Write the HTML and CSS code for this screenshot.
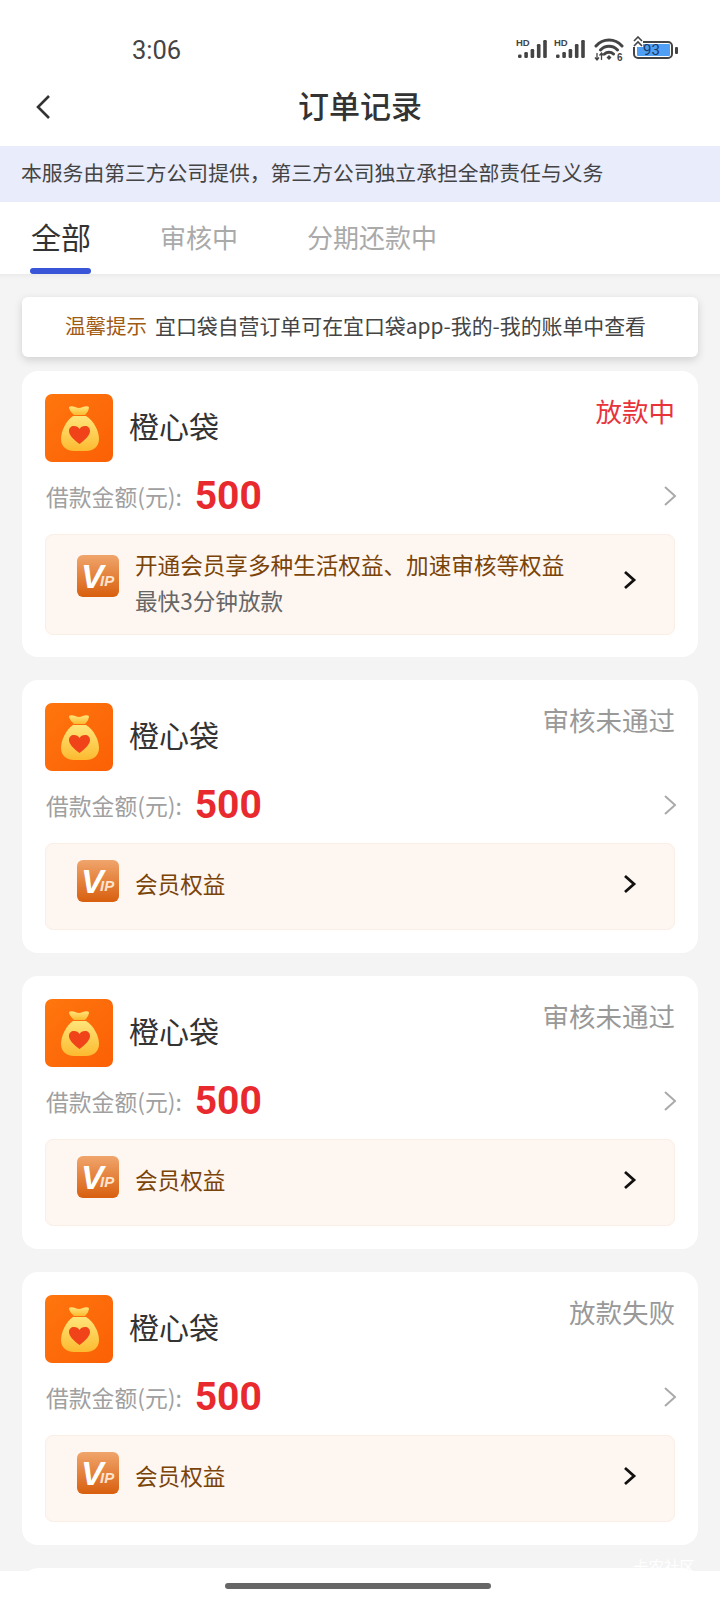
FILE: index.html
```html
<!DOCTYPE html>
<html lang="zh-CN">
<head>
    <meta charset="UTF-8">
    <meta name="viewport" content="width=device-width, initial-scale=1.0">
    <title>订单记录</title>
    <link rel="stylesheet" href="styles.css">
</head>
<body>
    <svg class="defs" width="0" height="0">
        <defs>
            <linearGradient id="bagBg" x1="0" y1="0" x2="1" y2="1">
                <stop offset="0" stop-color="#ff760e"/>
                <stop offset="1" stop-color="#fb6005"/>
            </linearGradient>
            <linearGradient id="bagFill" x1="0" y1="0" x2="0" y2="1">
                <stop offset="0" stop-color="#ffe57a"/>
                <stop offset="1" stop-color="#fcba30"/>
            </linearGradient>
            <linearGradient id="vipBg" x1="0" y1="0" x2="0" y2="1">
                <stop offset="0" stop-color="#f0a56c"/>
                <stop offset="1" stop-color="#d85f0e"/>
            </linearGradient>
            <symbol id="bag" viewBox="0 0 68 68">
                <rect width="68" height="68" rx="7" fill="url(#bagBg)"/>
                <path d="M24 13C27 11 31 14 34 14C37 14 41 11 44 13C44 16 42 19 40 21H29C27 19 24 16 24 13Z" fill="url(#bagFill)"/>
                <path d="M28 22H41C49 27 54 37 54 45C54 53 48 57 41 57H29C22 57 16 53 16 45C16 37 21 27 28 22Z" fill="url(#bagFill)"/>
                <path d="M34.5 50C28 45 24 41 24 37C24 34 26 32 29 32C31.5 32 33.5 33 34.5 35C35.5 33 37.5 32 40 32C43 32 45 34 45 37C45 41 41 45 34.5 50Z" fill="#f0431a"/>
            </symbol>
            <symbol id="vip" viewBox="0 0 42 42">
                <rect width="42" height="42" rx="6" fill="url(#vipBg)"/>
                <text x="4" y="33" class="vip-v">V</text>
                <text x="23" y="31" class="vip-ip">IP</text>
            </symbol>
            <symbol id="signal" viewBox="0 0 32 22">
                <text x="0" y="7" class="hd">HD</text>
                <rect x="2" y="15.5" width="3.6" height="3.5" rx="1.2"/>
                <rect x="8.3" y="13" width="3.6" height="6" rx="1.2"/>
                <rect x="14.6" y="10" width="3.6" height="9" rx="1.2"/>
                <rect x="20.9" y="5" width="3.6" height="14" rx="1.2"/>
                <rect x="27.2" y="1" width="3.6" height="18" rx="1.2"/>
            </symbol>
        </defs>
    </svg>

    <div class="page">
        <div class="status-bar">
            <span class="clock">3:06</span>
            <div class="status-icons">
                <svg class="signal"><use href="#signal"/></svg>
                <svg class="signal second"><use href="#signal"/></svg>
                <svg class="wifi" width="30" height="26" viewBox="0 0 30 26">
                    <path d="M2 9C9 1 21 1 28 9M6.5 13C11 8 19 8 23.5 13M10.5 17C13 14.5 17 14.5 19.5 17" fill="none" stroke="#444" stroke-width="3" stroke-linecap="round"/>
                    <path d="M12.5 20.5L15 18L17.5 20.5L15 23Z" fill="#444"/>
                    <path d="M3 16V23M1 20.5L3 23L5 20.5M7.5 16V23M5.5 18.5L7.5 16L9.5 18.5" fill="none" stroke="#444" stroke-width="1.3"/>
                    <text x="23" y="24" class="six">6</text>
                </svg>
                <div class="battery">
                    <div class="battery-body">
                        <div class="battery-level"></div>
                        <span class="battery-num">93</span>
                    </div>
                    <svg class="battery-charge" width="10" height="11" viewBox="0 0 10 11">
                        <path d="M1 5L5 1L9 5M1 10L5 6L9 10" fill="none" stroke="#444" stroke-width="1.6"/>
                    </svg>
                    <div class="battery-tip"></div>
                </div>
            </div>
        </div>

        <div class="nav-bar">
            <svg class="back" width="18" height="28" viewBox="0 0 18 28">
                <path d="M15 3L4 14l11 11" fill="none" stroke="#333" stroke-width="2.6"/>
            </svg>
            <h1>订单记录</h1>
        </div>

        <div class="banner">本服务由第三方公司提供，第三方公司独立承担全部责任与义务</div>

        <div class="tabs">
            <div class="tab active">全部</div>
            <div class="tab">审核中</div>
            <div class="tab">分期还款中</div>
        </div>

        <div class="list">
            <div class="notice"><span class="notice-tag">温馨提示</span>宜口袋自营订单可在宜口袋app-我的-我的账单中查看</div>

            <div class="card">
                <div class="card-head">
                    <svg class="logo"><use href="#bag"/></svg>
                    <span class="name">橙心袋</span>
                    <span class="state red">放款中</span>
                </div>
                <div class="amount-row">
                    <span class="amount-label">借款金额(元):</span>
                    <span class="amount">500</span>
                    <svg class="more" width="14" height="22" viewBox="0 0 14 22"><path d="M2 2l10 9-10 9" fill="none" stroke="#aaa" stroke-width="2"/></svg>
                </div>
                <div class="vip tall">
                    <svg class="vip-icon"><use href="#vip"/></svg>
                    <div class="vip-text">
                        <div class="vip-title">开通会员享多种生活权益、加速审核等权益</div>
                        <div class="vip-sub">最快3分钟放款</div>
                    </div>
                    <svg class="vip-arrow" width="14" height="20" viewBox="0 0 14 20"><path d="M2 2l9 8-9 8" fill="none" stroke="#111" stroke-width="2.8"/></svg>
                </div>
            </div>

            <div class="card">
                <div class="card-head">
                    <svg class="logo"><use href="#bag"/></svg>
                    <span class="name">橙心袋</span>
                    <span class="state">审核未通过</span>
                </div>
                <div class="amount-row">
                    <span class="amount-label">借款金额(元):</span>
                    <span class="amount">500</span>
                    <svg class="more" width="14" height="22" viewBox="0 0 14 22"><path d="M2 2l10 9-10 9" fill="none" stroke="#aaa" stroke-width="2"/></svg>
                </div>
                <div class="vip">
                    <svg class="vip-icon"><use href="#vip"/></svg>
                    <div class="vip-title">会员权益</div>
                    <svg class="vip-arrow" width="14" height="20" viewBox="0 0 14 20"><path d="M2 2l9 8-9 8" fill="none" stroke="#111" stroke-width="2.8"/></svg>
                </div>
            </div>

            <div class="card">
                <div class="card-head">
                    <svg class="logo"><use href="#bag"/></svg>
                    <span class="name">橙心袋</span>
                    <span class="state">审核未通过</span>
                </div>
                <div class="amount-row">
                    <span class="amount-label">借款金额(元):</span>
                    <span class="amount">500</span>
                    <svg class="more" width="14" height="22" viewBox="0 0 14 22"><path d="M2 2l10 9-10 9" fill="none" stroke="#aaa" stroke-width="2"/></svg>
                </div>
                <div class="vip">
                    <svg class="vip-icon"><use href="#vip"/></svg>
                    <div class="vip-title">会员权益</div>
                    <svg class="vip-arrow" width="14" height="20" viewBox="0 0 14 20"><path d="M2 2l9 8-9 8" fill="none" stroke="#111" stroke-width="2.8"/></svg>
                </div>
            </div>

            <div class="card">
                <div class="card-head">
                    <svg class="logo"><use href="#bag"/></svg>
                    <span class="name">橙心袋</span>
                    <span class="state">放款失败</span>
                </div>
                <div class="amount-row">
                    <span class="amount-label">借款金额(元):</span>
                    <span class="amount">500</span>
                    <svg class="more" width="14" height="22" viewBox="0 0 14 22"><path d="M2 2l10 9-10 9" fill="none" stroke="#aaa" stroke-width="2"/></svg>
                </div>
                <div class="vip">
                    <svg class="vip-icon"><use href="#vip"/></svg>
                    <div class="vip-title">会员权益</div>
                    <svg class="vip-arrow" width="14" height="20" viewBox="0 0 14 20"><path d="M2 2l9 8-9 8" fill="none" stroke="#111" stroke-width="2.8"/></svg>
                </div>
            </div>

            <!-- next card, only its top edge shows above the home bar -->
            <div class="card"></div>
        </div>

        <div class="home-area">
            <div class="home-bar"></div>
        </div>

        <div class="watermark">卡农社区</div>
    </div>
</body>
</html>
```

FILE: styles.css
```css
* {
    box-sizing: border-box;
}
html, body {
    margin: 0;
    padding: 0;
}
body {
    font-family: "Noto Sans CJK SC", "Noto Sans", sans-serif;
    background-color: #fff;
    color: #333;
}
.defs {
    position: absolute;
}
.page {
    position: relative;
    width: 720px;
    height: 1600px;
    display: flex;
    flex-direction: column;
    overflow: hidden;
}

/* status bar */
.status-bar {
    height: 78px;
    padding: 22px 42px 0 132px;
    display: flex;
    justify-content: space-between;
    align-items: center;
}
.clock {
    font-family: Roboto, sans-serif;
    font-size: 25.5px;
    color: #444;
}
.status-icons {
    display: flex;
    align-items: center;
}
.signal {
    width: 32px;
    height: 22px;
    fill: #444;
}
.signal.second {
    margin-left: 6px;
}
.wifi {
    margin-left: 8px;
}
.hd {
    font-family: "Liberation Sans", sans-serif;
    font-size: 9.5px;
    font-weight: bold;
    fill: #444;
}
.six {
    font-family: "Liberation Sans", sans-serif;
    font-size: 10px;
    font-weight: bold;
    fill: #444;
}
.battery {
    position: relative;
    display: flex;
    align-items: center;
    gap: 2px;
    margin-left: 9px;
}
.battery-body {
    position: relative;
    width: 40px;
    height: 18px;
    border: 2px solid #444;
    border-radius: 5px;
    padding: 1px 1px 1px 2px;
}
.battery-level {
    height: 100%;
    background-color: #4f9ff5;
    border-radius: 1px;
}
.battery-num {
    position: absolute;
    left: 8px;
    top: 0;
    font-family: Roboto, sans-serif;
    font-size: 15px;
    line-height: 14px;
    color: #1d3a66;
}
.battery-charge {
    position: absolute;
    left: 0;
    top: -5px;
    background-color: #fff;
}
.battery-tip {
    width: 3px;
    height: 7px;
    background-color: #444;
    border-radius: 1px;
}

/* title */
.nav-bar {
    position: relative;
    height: 68px;
    padding-bottom: 16px;
    display: flex;
    align-items: center;
    justify-content: center;
}
.nav-bar h1 {
    margin: 0;
    font-size: 31px;
    font-weight: 500;
    color: #333;
}
.back {
    position: absolute;
    left: 34px;
    top: 15px;
}
.banner {
    height: 56px;
    padding: 0 0 4px 21px;
    display: flex;
    align-items: center;
    background-color: #e9ecfb;
    font-size: 20.8px;
    color: #444;
}
.tabs {
    height: 72px;
    display: flex;
    background-color: #fff;
}
.tab {
    position: relative;
    font-size: 26px;
    line-height: 69px;
    color: #aaa;
    margin-left: 69px;
}
.tab.active {
    font-size: 30px;
    color: #333;
    margin-left: 31px;
}
.tab.active::after {
    content: "";
    position: absolute;
    left: -1px;
    right: 0;
    top: 66px;
    height: 6px;
    background-color: #3a56d8;
    border-radius: 3px;
}

/* list */
.list {
    flex: 1;
    padding: 23px 22px 0;
    background-color: #f4f4f4;
    box-shadow: inset 0 6px 6px -6px rgba(0, 0, 0, 0.08);
    overflow: hidden;
}
.notice {
    height: 60px;
    margin-bottom: 14px;
    padding: 0 0 4px 43px;
    display: flex;
    align-items: center;
    background-color: #fff;
    border-radius: 6px;
    box-shadow: 0 3px 8px rgba(0, 0, 0, 0.15);
    font-size: 20.9px;
    color: #444;
}
.notice-tag {
    font-size: 20.5px;
    color: #a05a14;
    margin-right: 8px;
}
.card {
    height: 273px;
    margin-bottom: 23px;
    padding: 23px 23px 0;
    background-color: #fff;
    border-radius: 16px;
}
.card:nth-child(2) {
    height: 286px;
}
.card-head {
    height: 68px;
    display: flex;
    align-items: center;
}
.logo {
    width: 68px;
    height: 68px;
    flex: none;
}
.name {
    margin: -6px 0 0 16px;
    font-size: 30px;
    color: #333;
}
.state {
    margin-left: auto;
    align-self: flex-start;
    font-size: 26.5px;
    line-height: 34px;
    color: #999;
}
.state.red {
    color: #e8333a;
}
.amount-row {
    height: 50px;
    margin-top: 9px;
    display: flex;
    align-items: center;
}
.amount-label {
    margin-left: 1px;
    font-size: 22.8px;
    color: #a0a0a0;
}
.amount {
    margin-left: 13px;
    font-family: Roboto, sans-serif;
    font-size: 39px;
    font-weight: bold;
    color: #e82a2f;
}
.more {
    margin-left: auto;
    margin-right: -2px;
}
.vip {
    position: relative;
    height: 87px;
    margin-top: 13px;
    padding: 16px 0 0 31px;
    display: flex;
    align-items: flex-start;
    background-color: #fef6f1;
    border: 1px solid #fbeee5;
    border-radius: 8px;
}
.vip.tall {
    height: 101px;
    padding-top: 20px;
}
.vip-icon {
    width: 42px;
    height: 42px;
    flex: none;
}
.vip-v {
    font-family: "Liberation Sans", sans-serif;
    font-size: 34px;
    font-weight: bold;
    font-style: italic;
    fill: #fff;
}
.vip-ip {
    font-family: "Liberation Sans", sans-serif;
    font-size: 15px;
    font-weight: bold;
    font-style: italic;
    fill: #fbe3d0;
}
.vip-title {
    margin: 8px 0 0 16px;
    font-size: 22.6px;
    line-height: 32px;
    color: #7a4408;
}
.tall .vip-title {
    margin: 0;
    line-height: 37px;
}
.vip-text {
    margin: -9px 0 0 16px;
}
.vip-sub {
    font-size: 22.6px;
    line-height: 36px;
    color: #666;
}
.vip-arrow {
    position: absolute;
    right: 37px;
    top: 30px;
}
.tall .vip-arrow {
    top: 35px;
}
.home-area {
    height: 29px;
    display: flex;
    align-items: flex-start;
    justify-content: center;
    background-color: #fff;
}
.home-bar {
    width: 266px;
    height: 6px;
    margin: 12px 5px 0 0;
    background-color: #666;
    border-radius: 3px;
}
.watermark {
    position: absolute;
    left: 633px;
    top: 1555px;
    font-size: 15.5px;
    line-height: 22px;
    color: #fff;
}
```
